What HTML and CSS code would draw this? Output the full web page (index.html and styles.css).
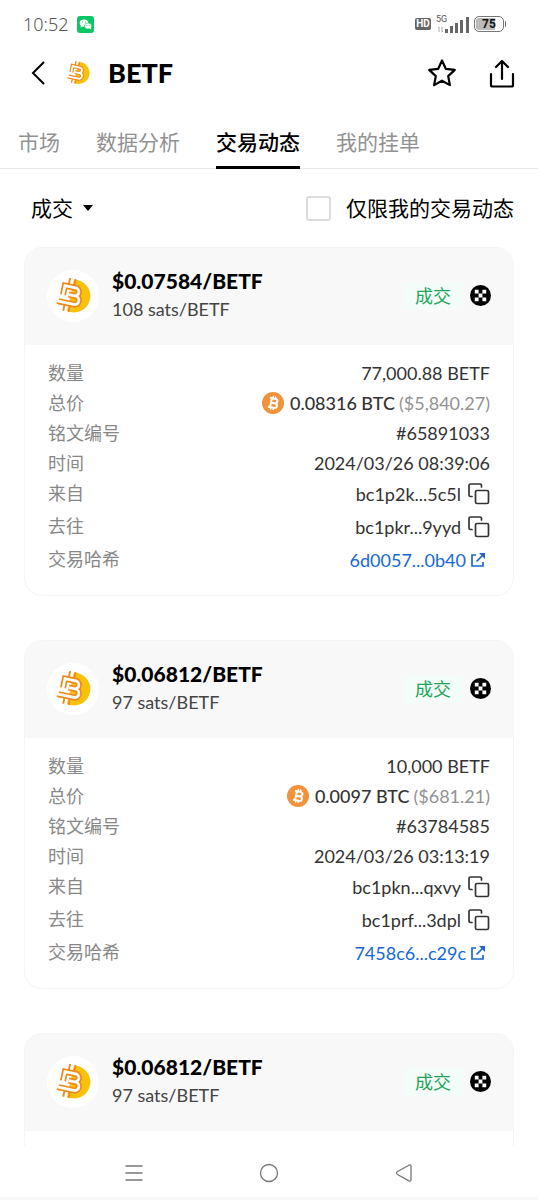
FILE: index.html
```html
<!DOCTYPE html>
<html lang="zh-CN">
<head>
<meta charset="utf-8">
<meta name="viewport" content="width=device-width, initial-scale=1">
<title>BETF</title>
<link rel="stylesheet" href="styles.css">
</head>
<body>
<svg class="defs" aria-hidden="true">
  <symbol id="token" viewBox="0 0 36 36">
    <path d="M19 1.500a16.500 16.500 0 1 1-7 31.500z" fill="#f9c20a"/>
    <g fill="none" transform="rotate(12 18 18)">
      <path d="M11.500 1v7M17 1v7M11.500 28v6.500M17 28v6.500M3.500 28h6" stroke="#ee8a1d" stroke-width="1.900"/>
      <path d="M8 19V9.500h11a4 4 0 0 1 0 8h-5.500h7a4.300 4.300 0 0 1 0 8.600H5" stroke="#ee8a1d" stroke-width="6.200"/>
      <path d="M8 20.500V9.500h11a4 4 0 0 1 0 8h-5.500h7a4.300 4.300 0 0 1 0 8.600H3.500" stroke="#fff" stroke-width="2.700"/>
    </g>
  </symbol>
  <symbol id="market" viewBox="0 0 22 22">
    <circle cx="11" cy="11" r="11"/>
    <path fill="#fff" d="M5 5h4v4H5zM13 5h4v4h-4zM9 9h4v4H9zM5 13h4v4H5zM13 13h4v4h-4z"/>
  </symbol>
  <symbol id="btc" viewBox="0 0 22 22">
    <circle cx="11" cy="11" r="11" fill="#f2923a"/>
    <g transform="rotate(12 11 11)" fill="none" stroke="#fff"><path d="M7 6.500h5q3 0 3 2.200T12 11H8.500h4q3 0 3 2.300t-3 2.300H7M9 6.500v9" stroke-width="2"/><path d="M10 4v2.500M12.500 4v2.500M10 15.500V18M12.500 15.500V18" stroke-width="1.300"/></g>
  </symbol>
  <symbol id="copy" viewBox="0 0 22 22">
    <g fill="none" stroke="#333" stroke-width="1.700" stroke-linecap="round"><rect x="7.500" y="7.500" width="13" height="13" rx="1.500"/><path d="M4 13.500H2.500A1.500 1.500 0 0 1 1 12V2.500A1.500 1.500 0 0 1 2.500 1H12a1.500 1.500 0 0 1 1.500 1.500V4"/></g>
  </symbol>
  <symbol id="open" viewBox="0 0 16 16">
    <path d="M6 3H2v11h11v-4M14 2L6.500 9.500" fill="none" stroke="#1769d2" stroke-width="1.700"/><path d="M9 1h6v6z" fill="#1769d2"/>
  </symbol>
</svg>
<div class="app">
  <div class="status">
    <span class="clock">10:52</span>
    <svg class="wechat" viewBox="0 0 17 17"><rect width="17" height="17" rx="3" fill="#0bc763"/><ellipse cx="7" cy="7" rx="4.300" ry="3.600" fill="#fff"/><path d="M4 9l-.5 2.500L7 10z" fill="#fff"/><ellipse cx="11" cy="10" rx="3.700" ry="3" fill="#fff" stroke="#0bc763" stroke-width=".6"/><path d="M12 12l2 1.500V11z" fill="#fff"/><g fill="#0bc763"><circle cx="5.500" cy="6" r=".6"/><circle cx="8.500" cy="6" r=".6"/><circle cx="9.800" cy="9.400" r=".5"/><circle cx="12.200" cy="9.400" r=".5"/></g></svg>
    <span class="grow"></span>
    <span class="hd">HD</span>
    <span class="signal"><span class="net">5G</span><svg class="bars" viewBox="0 0 33 17"><path d="M3 11v5M6 11v5M2 12l1-1M7 15l-1 1" stroke="#aaa" fill="none"/><path fill="#666" d="M9 13h3v4H9zM14 10h3v7h-3zM19 7h3v10h-3zM24 4h3v13h-3zM30 1h3v16h-3z"/></svg></span>
    <span class="battery">75</span><span class="tip"></span>
  </div>
  <header class="top">
    <button class="icon" aria-label="返回"><svg class="back" viewBox="0 0 14 24"><path d="M12.500 1.500L2 12l10.500 10.500" fill="none" stroke="#000" stroke-width="2" stroke-linecap="round"/></svg></button>
    <svg class="logo"><use href="#token"/></svg>
    <h1>BETF</h1>
    <button class="icon" aria-label="收藏"><svg class="action" viewBox="0 0 30 30"><path d="M15 2.500l3.800 8.300 9 1.100-6.600 6.200 1.700 9L15 22.700l-7.900 4.400 1.700-9-6.600-6.200 9-1.100z" fill="none" stroke="#000" stroke-width="2.200" stroke-linejoin="round"/></svg></button>
    <button class="icon" aria-label="分享"><svg class="action" viewBox="0 0 30 30"><path d="M4 16v11a1.500 1.500 0 0 0 1.500 1.500h19A1.500 1.500 0 0 0 26 27V16M15 21V3M9 9l6-6 6 6" fill="none" stroke="#000" stroke-width="2.200" stroke-linecap="round" stroke-linejoin="round"/></svg></button>
  </header>
  <nav class="tabs">
    <a href="#">市场</a><a href="#">数据分析</a><a class="on" href="#" aria-current="page">交易动态</a><a href="#">我的挂单</a>
  </nav>
  <div class="filters">
    <button class="drop">成交<svg class="caret" viewBox="0 0 10 6"><path d="M0 0h10L5 6z"/></svg></button>
    <label class="mine"><input type="checkbox">仅限我的交易动态</label>
  </div>
  <main class="list">
    <article class="card">
      <header class="head"><span class="disc"><svg class="coin"><use href="#token"/></svg></span><div class="price"><h2>$0.07584/BETF</h2><p>108 sats/BETF</p></div><span class="tag">成交</span><svg class="market"><use href="#market"/></svg></header>
      <dl class="rows">
        <div><dt>数量</dt><dd>77,000.88 BETF</dd></div>
        <div><dt>总价</dt><dd><svg class="btc"><use href="#btc"/></svg><b>0.08316 BTC</b><span class="usd">($5,840.27)</span></dd></div>
        <div><dt>铭文编号</dt><dd>#65891033</dd></div>
        <div><dt>时间</dt><dd>2024/03/26 08:39:06</dd></div>
        <div class="tall"><dt>来自</dt><dd>bc1p2k...5c5l<button class="icon" aria-label="复制"><svg class="copy"><use href="#copy"/></svg></button></dd></div>
        <div class="tall"><dt>去往</dt><dd>bc1pkr...9yyd<button class="icon" aria-label="复制"><svg class="copy"><use href="#copy"/></svg></button></dd></div>
        <div class="tall"><dt>交易哈希</dt><dd><a href="#">6d0057...0b40<svg class="open"><use href="#open"/></svg></a></dd></div>
      </dl>
    </article>
    <article class="card">
      <header class="head"><span class="disc"><svg class="coin"><use href="#token"/></svg></span><div class="price"><h2>$0.06812/BETF</h2><p>97 sats/BETF</p></div><span class="tag">成交</span><svg class="market"><use href="#market"/></svg></header>
      <dl class="rows">
        <div><dt>数量</dt><dd>10,000 BETF</dd></div>
        <div><dt>总价</dt><dd><svg class="btc"><use href="#btc"/></svg><b>0.0097 BTC</b><span class="usd">($681.21)</span></dd></div>
        <div><dt>铭文编号</dt><dd>#63784585</dd></div>
        <div><dt>时间</dt><dd>2024/03/26 03:13:19</dd></div>
        <div class="tall"><dt>来自</dt><dd>bc1pkn...qxvy<button class="icon" aria-label="复制"><svg class="copy"><use href="#copy"/></svg></button></dd></div>
        <div class="tall"><dt>去往</dt><dd>bc1prf...3dpl<button class="icon" aria-label="复制"><svg class="copy"><use href="#copy"/></svg></button></dd></div>
        <div class="tall"><dt>交易哈希</dt><dd><a href="#">7458c6...c29c<svg class="open"><use href="#open"/></svg></a></dd></div>
      </dl>
    </article>
    <article class="card">
      <header class="head"><span class="disc"><svg class="coin"><use href="#token"/></svg></span><div class="price"><h2>$0.06812/BETF</h2><p>97 sats/BETF</p></div><span class="tag">成交</span><svg class="market"><use href="#market"/></svg></header>
      <div class="rows"></div>
    </article>
  </main>
  <footer class="system">
    <button class="icon" aria-label="菜单"><svg class="key" viewBox="0 0 20 20"><path d="M1.500 3h17M1.500 10h17M1.500 17h17" stroke="#777" stroke-width="1.300"/></svg></button>
    <button class="icon" aria-label="主页"><svg class="key" viewBox="0 0 20 20"><circle cx="10" cy="10" r="8.500" fill="none" stroke="#777" stroke-width="1.300"/></svg></button>
    <button class="icon" aria-label="后退"><svg class="key" viewBox="0 0 20 20"><path d="M15 2.200L3.500 8.500q-2 1.500 0 3L15 17.800q2 .8 2-1V3.200q0-1.800-2-1z" fill="none" stroke="#777" stroke-width="1.300"/></svg></button>
  </footer>
</div>
</body>
</html>
```
FILE: styles.css
```css
* { box-sizing: border-box; }
body { margin: 0; background: #fff; color: #000; font-family: Lato, "Noto Sans CJK SC", sans-serif; font-size: 18px; }
button { font: inherit; color: inherit; border: 0; background: none; padding: 0; }
a { text-decoration: none; }
h1, h2, p, dl, dd { margin: 0; }
svg { display: block; flex: none; }
.defs { display: none; }
.app { height: 100vh; display: flex; flex-direction: column; overflow: hidden; }
.app > * { flex: none; }
.grow { flex: 1; }

.status { display: flex; align-items: center; height: 48px; padding: 0 32px 0 23px; color: #555; }
.clock { font: 300 18px/24px "Noto Sans", sans-serif; margin-right: 8px; }
.wechat { width: 17px; height: 17px; }
.hd { background: #666; color: #fff; font: bold 10px/12px Roboto, sans-serif; width: 16px; border-radius: 2px; display: flex; justify-content: center; margin-right: 5px; }
.signal { position: relative; width: 33px; height: 17px; }
.net { position: absolute; left: 0; top: -1px; font: 9px/9px Roboto, sans-serif; }
.bars { width: 33px; height: 17px; }
.battery { width: 30px; height: 16px; margin-left: 5px; border: 1px solid #777; border-radius: 5px; box-shadow: inset 0 0 0 1px #fff; background: linear-gradient(90deg, #bbb 72%, #fff 72%); color: #111; font: bold 12px/14px Roboto, sans-serif; text-align: center; }
.tip { width: 1px; height: 6px; margin-left: 1px; background: #777; }

.top { display: flex; align-items: center; height: 50px; padding: 0 21px 0 31px; }
.back { width: 14px; height: 24px; }
.logo { width: 24px; height: 24px; margin-left: 21px; }
.top h1 { flex: 1; margin-left: 18px; font: 900 27px/32px Lato, sans-serif; }
.action { width: 30px; height: 30px; }
.top .icon + .icon { margin-left: 30px; }

.tabs { display: flex; gap: 36px; height: 71px; padding: 24px 18px 0; border-bottom: 1px solid #e8e8e8; font-size: 21px; line-height: 40px; }
.tabs a { color: #929292; height: 47px; }
.tabs .on { color: #000; font-weight: 500; border-bottom: 3px solid #000; }

.filters { display: flex; justify-content: space-between; align-items: center; height: 78px; padding: 0 24px 0 31px; font-size: 21px; line-height: 30px; }
.drop, .mine { display: flex; align-items: center; }
.caret { width: 10px; height: 6px; margin-left: 10px; }
.mine input { appearance: none; width: 25px; height: 25px; margin: 0 15px 0 0; border: 2px solid #ddd; border-radius: 3px; background: #fff; }

.app > .list { flex: 1; min-height: 0; overflow: hidden; display: flex; flex-direction: column; gap: 44px; padding: 0 24px; }
.card { flex: none; border: 1px solid #f4f4f4; border-radius: 18px; overflow: hidden; }
.head { display: flex; align-items: center; height: 97px; padding: 0 22px 2px; background: #f8f8f8; }
.disc { width: 52px; height: 52px; border-radius: 50%; background: #fff; display: flex; align-items: center; justify-content: center; }
.coin { width: 36px; height: 36px; }
.price { flex: 1; margin-left: 13px; padding-bottom: 2px; }
.price h2 { font: 900 21px/28px Lato, sans-serif; }
.price p { color: #444; line-height: 28px; }
.tag { color: #1ea557; background: #f3fcf8; padding: 0 12px; line-height: 28px; }
.market { width: 21px; height: 21px; margin-left: 7px; }

.rows { padding: 13px 23px 18px; min-height: 40px; }
.rows > div { display: flex; justify-content: space-between; height: 30px; line-height: 30px; }
.rows > .tall { height: 33px; }
.rows dt { color: #888; }
.rows dd { display: flex; align-items: center; color: #333; }
.rows .tall dd { height: 32px; }
.rows b { font-weight: 500; margin-left: 6px; }
.usd { color: #929292; margin-left: 4px; }
.btc { width: 22px; height: 22px; }
.copy { width: 22px; height: 22px; margin-left: 7px; }
.rows a { display: flex; align-items: center; color: #1769d2; }
.open { width: 16px; height: 16px; margin: 0 4px; }

.system { display: flex; justify-content: space-around; align-items: center; height: 54px; padding: 2px 67px 0; background: #fff; border-bottom: 3px solid #f8f8f8; }
.key { width: 20px; height: 20px; }
```
